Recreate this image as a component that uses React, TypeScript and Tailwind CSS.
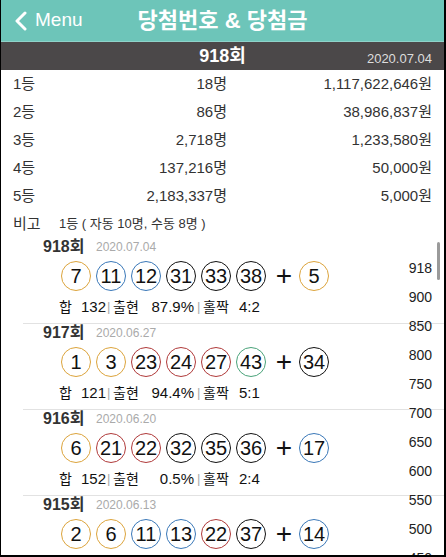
import React from "react";

const prizes = [
  { rank: "1등", count: "18명", amount: "1,117,622,646원" },
  { rank: "2등", count: "86명", amount: "38,986,837원" },
  { rank: "3등", count: "2,718명", amount: "1,233,580원" },
  { rank: "4등", count: "137,216명", amount: "50,000원" },
  { rank: "5등", count: "2,183,337명", amount: "5,000원" },
];

const draws = [
  { no: 918, date: "2020.07.04", nums: [7, 11, 12, 31, 33, 38], bonus: 5, sum: 132, pct: "87.9%", oe: "4:2" },
  { no: 917, date: "2020.06.27", nums: [1, 3, 23, 24, 27, 43], bonus: 34, sum: 121, pct: "94.4%", oe: "5:1" },
  { no: 916, date: "2020.06.20", nums: [6, 21, 22, 32, 35, 36], bonus: 17, sum: 152, pct: "0.5%", oe: "2:4" },
  { no: 915, date: "2020.06.13", nums: [2, 6, 11, 13, 22, 37], bonus: 14, sum: 0, pct: "", oe: "" },
];

const index = ["918", "900", "850", "800", "750", "700", "650", "600", "550", "500", "450"];

function ballColor(n: number) {
  if (n <= 10) return "border-[#dca43c]";
  if (n <= 20) return "border-[#3a78b8]";
  if (n <= 30) return "border-[#b03a3a]";
  if (n <= 40) return "border-[#111111]";
  return "border-[#4aa37a]";
}

function Ball({ n }: { n: number }) {
  return (
    <div
      className={`flex h-[30px] w-[30px] shrink-0 items-center justify-center rounded-full border-[1.5px] text-[20px] leading-none text-[#111] ${ballColor(n)}`}
    >
      {n}
    </div>
  );
}

export default function App() {
  return (
    <div
      className="relative h-[557px] w-[446px] overflow-hidden border-b-2 border-l border-r-2 border-black bg-white text-[#333]"
      style={{ fontFamily: '"Liberation Sans", "Noto Sans CJK KR", sans-serif' }}
    >
      {/* Header */}
      <div className="relative flex h-[42px] items-center justify-center border-b border-[#8fd3ca] bg-[#6dc5b9]">
        <div className="absolute left-[13px] top-0 flex h-full items-center gap-[7px] text-white">
          <svg width="14" height="20" viewBox="0 0 14 20" fill="none">
            <path d="M11 2 L3 10 L11 18" stroke="white" strokeWidth="3" strokeLinecap="round" strokeLinejoin="round" />
          </svg>
          <span className="text-[19px]">Menu</span>
        </div>
        <span className="text-[22px] font-bold text-white">당첨번호 &amp; 당첨금</span>
      </div>

      {/* Draw bar */}
      <div className="relative flex h-[28px] items-center justify-center bg-[#4b4849]">
        <span className="text-[18px] font-bold text-white">918회</span>
        <span className="absolute bottom-[2px] right-[12px] text-[13px] text-[#dddddd]">2020.07.04</span>
      </div>

      {/* Prize table */}
      <div className="pl-[12px] pr-[12px]">
        {prizes.map((p) => (
          <div key={p.rank} className="flex h-[28px] items-center text-[15px]">
            <span className="w-[40px]">{p.rank}</span>
            <span className="w-[174px] text-right">{p.count}</span>
            <span className="flex-1 text-right">{p.amount}</span>
          </div>
        ))}
        <div className="flex h-[28px] items-center">
          <span className="w-[46px] text-[15px]">비고</span>
          <span className="text-[13px]">1등 ( 자동 10명, 수동 8명 )</span>
        </div>
      </div>

      {/* Draw list */}
      <div>
        {draws.map((d) => (
          <div key={d.no} className="ml-[22px] border-b border-[#e2e2e2] pb-[7px]">
            <div className="flex h-[18px] items-center pl-[20px]">
              <span className="w-[53px] text-[16px] font-bold text-[#333]">{d.no}회</span>
              <span className="text-[12px] text-[#aaaaaa]">{d.date}</span>
            </div>
            <div className="mt-[5px] flex h-[30px] items-center pl-[38px]">
              <div className="flex gap-[5px]">
                {d.nums.map((n) => (
                  <Ball key={n} n={n} />
                ))}
              </div>
              <span className="ml-[8px] mr-[5px] w-[20px] text-center text-[28px] font-light leading-none text-[#111]">+</span>
              <Ball n={d.bonus} />
            </div>
            {d.sum > 0 && (
              <div className="mt-[7px] flex h-[18px] items-center whitespace-nowrap pl-[36px] text-[15px] text-[#111]">
                <span className="w-[22px] shrink-0 text-[14px]">합</span>
                <span className="w-[26px] shrink-0">{d.sum}</span>
                <span className="w-[6px] shrink-0 text-[13px] text-[#aaa]">|</span>
                <span className="w-[30px] shrink-0 text-[14px]">출현</span>
                <span className="w-[51px] shrink-0 text-right">{d.pct}</span>
                <span className="ml-[3px] w-[6px] shrink-0 text-[13px] text-[#aaa]">|</span>
                <span className="w-[36px] shrink-0 text-[14px]">홀짝</span>
                <span>{d.oe}</span>
              </div>
            )}
          </div>
        ))}
      </div>

      {/* Section index overlay */}
      <div className="absolute right-[12px] top-[254px] flex flex-col items-end">
        {index.map((v) => (
          <span key={v} className="flex h-[29px] items-center text-[14px] text-[#222]">
            {v}
          </span>
        ))}
      </div>
      <div className="absolute right-[4px] top-[242px] h-[38px] w-[3px] rounded-full bg-[#9a9a9a]" />
    </div>
  );
}
